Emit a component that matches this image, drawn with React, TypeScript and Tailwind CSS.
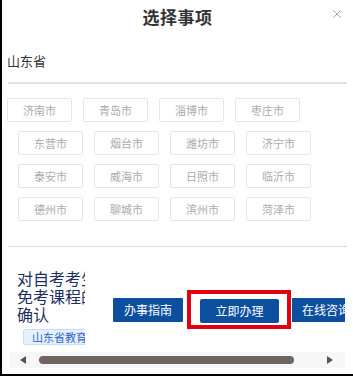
import { X } from "lucide-react";

const rows = [
  ["济南市", "青岛市", "淄博市", "枣庄市"],
  ["东营市", "烟台市", "潍坊市", "济宁市"],
  ["泰安市", "威海市", "日照市", "临沂市"],
  ["德州市", "聊城市", "滨州市", "菏泽市"],
];

const font = { fontFamily: '"Noto Sans CJK SC", "Noto Sans", sans-serif' };

const CityButton = ({ name }: { name: string }) => (
  <button className="w-[65px] h-[24px] border border-[#e6e6e6] rounded-[2px] text-[11px] text-[#ababab] bg-white">
    {name}
  </button>
);

const App = () => {
  return (
    <div
      className="w-[353px] h-[376px] bg-white border-l-2 border-b-2 border-black overflow-hidden flex flex-col"
      style={font}
    >
      {/* header */}
      <div className="relative h-[32px] flex items-center justify-center pt-[1px]">
        <h1 className="text-[17px] font-bold text-[#333] tracking-[0.5px]">选择事项</h1>
        <X className="absolute right-[9px] top-[7px] w-[14px] h-[14px] text-[#9a9a9a]" strokeWidth={1.5} />
      </div>

      <div className="mt-[20px] pl-[5px] text-[13px] leading-[18px] text-[#333]">山东省</div>
      <div className="mt-[12px] mx-[6px] h-[2px] bg-[#e2e2e2]" />

      {/* cities */}
      <div className="mt-[14px] flex flex-col gap-[9px]">
        {rows.map((row, i) => (
          <div key={i} className={`flex gap-[11px] ${i === 0 ? "pl-[5px]" : "pl-[16px]"}`}>
            {row.map((c) => (
              <CityButton key={c} name={c} />
            ))}
          </div>
        ))}
      </div>

      <div className="mt-[25px] mx-[6px] h-[1px] bg-[#dcdcdc]" />

      {/* matter row */}
      <div className="mt-[22px] flex items-start overflow-hidden">
        <div className="ml-[15px] w-[68px] shrink-0 overflow-hidden">
          <div className="w-[84px] text-[16px] leading-[18px] text-[#1c2f5e]">对自考考生免考课程的确认</div>
          <div className="mt-[6px] ml-[6px] w-[80px] h-[16px] pl-[8px] bg-[#e6effc] border border-[#cbdcf5] rounded-[2px] text-[11px] leading-[14px] text-[#2d66c9] whitespace-nowrap">
            山东省教育厅
          </div>
        </div>
        <div className="mt-[21px] ml-[28px] flex items-center shrink-0">
          <button className="w-[70px] h-[24px] bg-[#0d4f9f] text-white text-[12px] rounded-[1px]">办事指南</button>
          <div className="ml-[4px] w-[104px] h-[39px] border-[4px] border-[#e3000f] flex items-center pl-[9px] pt-[3px]">
            <button className="w-[79px] h-[24px] bg-[#0d4f9f] text-white text-[12px] rounded-[2px]">立即办理</button>
          </div>
          <button className="ml-[1px] w-[53px] h-[24px] bg-[#0d4f9f] text-white text-[12px] text-left pl-[10px] whitespace-nowrap overflow-hidden">
            在线咨询
          </button>
        </div>
      </div>

      {/* scrollbar */}
      <div className="mt-auto mb-[6px] mx-[8px] h-[16px] bg-[#f6f6f6] flex items-center">
        <span className="ml-[10px] w-0 h-0 border-y-[4px] border-y-transparent border-r-[6px] border-r-[#555]" />
        <div className="ml-[13px] w-[255px] h-[8px] rounded-full bg-[#6e6561]" />
        <span className="ml-auto mr-[12px] w-0 h-0 border-y-[4px] border-y-transparent border-l-[6px] border-l-[#555]" />
      </div>
    </div>
  );
};

export default App;
